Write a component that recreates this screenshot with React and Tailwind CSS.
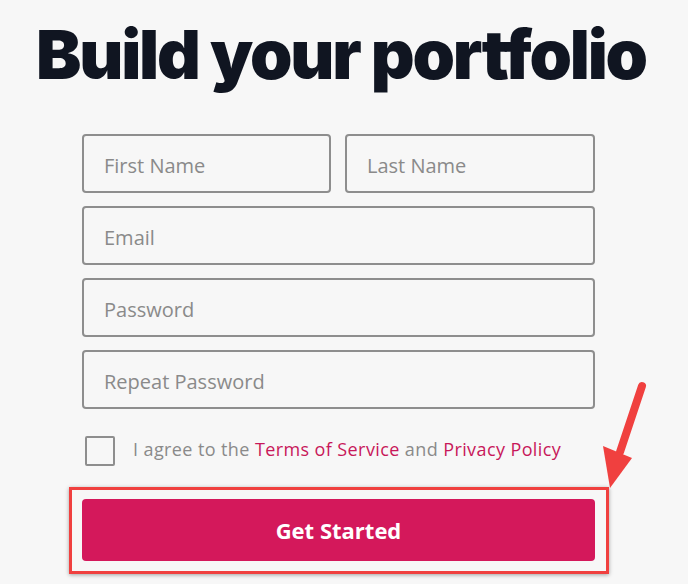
export default function App() {
  const font = { fontFamily: "'Open Sans', Lato, sans-serif" };
  const inputCls =
    "h-[59px] border-2 border-[#8e8e8e] rounded-[4px] bg-transparent pl-[20px] pr-[12px] pt-[4px] text-[20px] text-[#555] placeholder:text-[#8a8a8a] outline-none";
  return (
    <div className="relative w-[688px] h-[584px] bg-[#f7f7f7] overflow-hidden" style={font}>
      <h1
        className="pt-[14px] pl-[36px] text-[68px] leading-[80px] font-black tracking-[-2.2px] text-[#101521] whitespace-nowrap"
        style={{ fontFamily: "Inter, sans-serif" }}
      >
        Build your portfolio
      </h1>
      <div className="ml-[82px] w-[513px] mt-[40px] flex flex-col gap-[13px]">
        <div className="flex gap-[14px]">
          <input placeholder="First Name" className={`w-[249px] ${inputCls}`} />
          <input placeholder="Last Name" className={`w-[250px] ${inputCls}`} />
        </div>
        <input placeholder="Email" className={`w-full ${inputCls}`} />
        <input placeholder="Password" className={`w-full ${inputCls}`} />
        <input placeholder="Repeat Password" className={`w-full ${inputCls}`} />
        <div className="flex items-center mt-[14px] pl-[3px]">
          <div className="w-[30px] h-[30px] border-2 border-[#8e8e8e] rounded-[2px]" />
          <span className="ml-[18px] mb-[3px] text-[18px] tracking-[0.4px] text-[#8a8a8a]">
            I agree to the <span className="text-[#c8185a]">Terms of Service</span> and{" "}
            <span className="text-[#c8185a]">Privacy Policy</span>
          </span>
        </div>
        <button className="mt-[20px] w-full h-[62px] rounded-[4px] bg-[#d4185b] text-white text-[22px] font-bold">
          Get Started
        </button>
      </div>
      <div className="absolute left-[69px] top-[487px] w-[540px] h-[87px] border-[3px] border-[#f0403f] shadow-[0_1px_4px_rgba(0,0,0,0.35)]" />
      <svg className="absolute left-0 top-0" width="688" height="584" viewBox="0 0 688 584">
        <line x1="642" y1="386" x2="620" y2="452" stroke="#f0403f" strokeWidth="8" strokeLinecap="round" />
        <polygon points="603,446 632,458 610,488" fill="#f0403f" />
      </svg>
    </div>
  );
}
